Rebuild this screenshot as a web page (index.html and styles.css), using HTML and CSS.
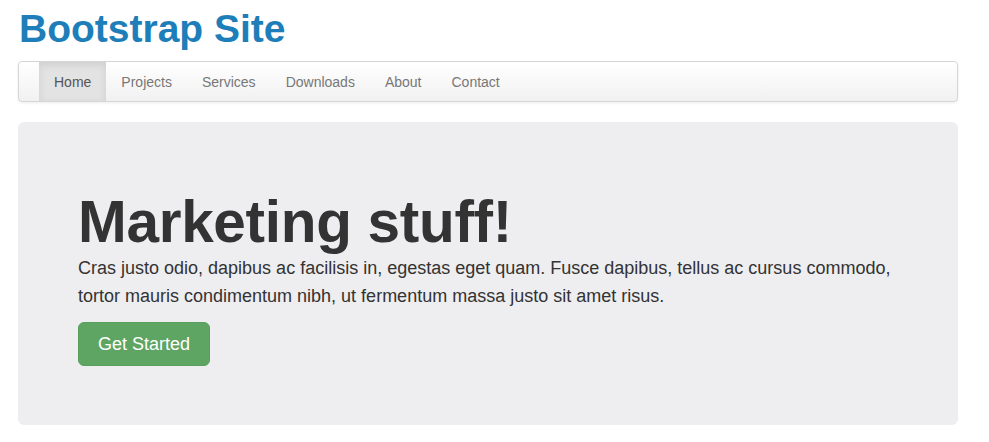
FILE: index.html
```html
<!DOCTYPE html>
<html lang="en">
<head>
<meta charset="utf-8">
<title>Bootstrap Site</title>
<link rel="stylesheet" href="styles.css">
</head>
<body>
<div class="container">
  <h1 class="site-title">Bootstrap Site</h1>
  <nav class="navbar">
    <ul class="nav">
      <li class="active"><a href="#">Home</a></li>
      <li><a href="#">Projects</a></li>
      <li><a href="#">Services</a></li>
      <li><a href="#">Downloads</a></li>
      <li><a href="#">About</a></li>
      <li><a href="#">Contact</a></li>
    </ul>
  </nav>
  <div class="jumbotron">
    <h1 class="hero-title">Marketing stuff!</h1>
    <p class="lead">Cras justo odio, dapibus ac facilisis in, egestas eget quam. Fusce dapibus, tellus ac cursus commodo, tortor mauris condimentum nibh, ut fermentum massa justo sit amet risus.</p>
    <a class="btn-success" href="#">Get Started</a>
  </div>
</div>
</body>
</html>
```
FILE: styles.css
```css
* { box-sizing: border-box; }
body {
  margin: 0;
  background: #ffffff;
  font-family: "Liberation Sans", Arial, sans-serif;
  color: #333333;
}
.container {
  width: 940px;
  margin-left: 18px;
}
.site-title {
  margin: 7px 0 11px 1px;
  font-size: 39px;
  line-height: 43px;
  font-weight: bold;
  color: #1d7eb9;
}
.navbar {
  height: 41px;
  border: 1px solid #d6d6d6;
  border-radius: 4px;
  background: linear-gradient(#ffffff, #f1f1f1);
  box-shadow: 0 1px 3px rgba(0,0,0,0.08);
  padding-left: 20px;
}
.nav {
  list-style: none;
  margin: 0;
  padding: 0;
  display: flex;
  height: 100%;
}
.nav li { display: flex; }
.nav a {
  display: block;
  padding: 10px 15px 9px;
  line-height: 20px;
  font-size: 14px;
  color: #777777;
  text-decoration: none;
}
.nav .active a {
  color: #555555;
  background: #e3e3e3;
  box-shadow: inset 0 3px 8px rgba(0,0,0,0.09);
}
.jumbotron {
  margin-top: 20px;
  height: 303px;
  background: #eeedf0;
  border-radius: 6px;
  padding: 70px 60px 0;
}
.hero-title {
  margin: 0;
  font-size: 58.5px;
  line-height: 60px;
  font-weight: bold;
  color: #333333;
  letter-spacing: -0.3px;
}
.lead {
  margin: 2px 0 12px;
  font-size: 18px;
  line-height: 28px;
  color: #333333;
}
.btn-success {
  display: inline-block;
  padding: 9px 19px;
  font-size: 18px;
  line-height: 24px;
  color: #ffffff;
  background: #5ea462;
  border: 1px solid #58a05c;
  border-radius: 6px;
  text-decoration: none;
}
```
